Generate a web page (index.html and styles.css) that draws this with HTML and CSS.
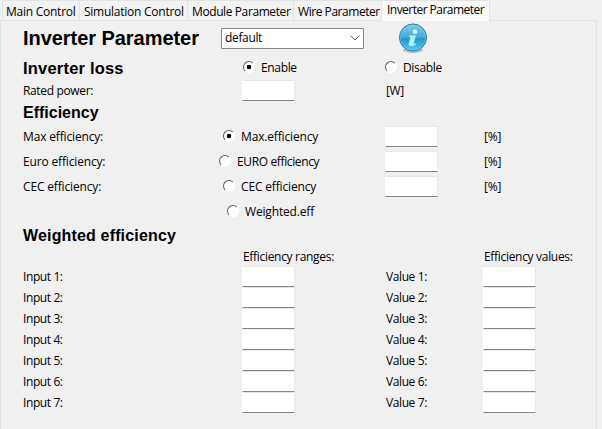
FILE: index.html
```
<!DOCTYPE html>
<html lang="en">
<head>
<meta charset="utf-8">
<title>Inverter Parameter</title>
<link rel="stylesheet" href="styles.css">
</head>
<body>
<nav class="tabs">
  <div class="tab main"><span>Main Control</span></div>
  <div class="tab sim"><span>Simulation Control</span></div>
  <div class="tab module"><span>Module Parameter</span></div>
  <div class="tab wire"><span>Wire Parameter</span></div>
  <div class="tab active"><span>Inverter Parameter</span></div>
</nav>
<main class="panel">
  <div class="row title-row">
    <h1>Inverter Parameter</h1>
    <div class="select"><span>default</span><svg width="12" height="8" viewBox="0 0 12 8"><path d="M1.500 1.500 6 6l4.500-4.500" fill="none" stroke="#555" stroke-width="1"/></svg></div>
    <svg class="info" width="30" height="31" viewBox="0 0 30 31">
      <defs>
        <linearGradient id="g" x1="0" y1="0" x2="0" y2="1"><stop offset="0" stop-color="#83c9e4"/><stop offset=".48" stop-color="#4aaed8"/><stop offset=".55" stop-color="#2795cf"/><stop offset="1" stop-color="#4fcdf0"/></linearGradient>
      </defs>
      <ellipse cx="15" cy="27" rx="10" ry="3" fill="#b3bcc0"/>
      <circle cx="15" cy="14.500" r="13.500" fill="url(#g)" stroke="#197a9f"/>
      <circle cx="15" cy="14.500" r="12.500" fill="none" stroke="#8ad9ee" stroke-opacity=".6" stroke-width=".8"/>
      <circle cx="17" cy="8.700" r="2.300" fill="#c8fbfa"/>
      <path d="M11.500 12.500h6.500l-2.200 7.500c-.2.900.6.800 1.700.2l.8.500c-1.800 2-3.400 2.500-5 2.500-2.200 0-3-1-2.500-2.700l1.600-5.500c.2-.8-.2-.9-1.300-.8z" fill="#a5f5f7"/>
    </svg>
  </div>
  <div class="row loss-row">
    <h2 class="loss-title">Inverter loss</h2>
    <label class="radio shift-lg"><i class="dot on"></i><span>Enable</span></label>
    <label class="radio disable"><i class="dot"></i><span>Disable</span></label>
  </div>
  <div class="row rated-row">
    <span>Rated power:</span><input class="shift-lg"><span class="unit">[W]</span>
  </div>
  <div class="row eff-row"><h2>Efficiency</h2></div>
  <div class="row choice"><span>Max efficiency:</span><label class="radio shift-sm"><i class="dot on"></i><span>Max.efficiency</span></label><input><span class="unit">[%]</span></div>
  <div class="row choice"><span>Euro efficiency:</span><label class="radio euro"><i class="dot"></i><span>EURO efficiency</span></label><input><span class="unit">[%]</span></div>
  <div class="row choice"><span>CEC efficiency:</span><label class="radio shift-sm"><i class="dot"></i><span>CEC efficiency</span></label><input><span class="unit">[%]</span></div>
  <div class="row choice"><span></span><label class="radio shift-md"><i class="dot"></i><span>Weighted.eff</span></label></div>
  <div class="row weighted-row"><h2 class="weighted-title">Weighted efficiency</h2></div>
  <div class="row head-row"><span></span><span class="range-head">Efficiency ranges:</span><span></span><span class="value-head">Efficiency values:</span></div>
  <div class="row pair"><span>Input 1:</span><input class="shift-lg"><span class="unit">Value 1:</span><input></div>
  <div class="row pair"><span>Input 2:</span><input class="shift-lg"><span class="unit">Value 2:</span><input></div>
  <div class="row pair"><span>Input 3:</span><input class="shift-lg"><span class="unit">Value 3:</span><input></div>
  <div class="row pair"><span>Input 4:</span><input class="shift-lg"><span class="unit">Value 4:</span><input></div>
  <div class="row pair"><span>Input 5:</span><input class="shift-lg"><span class="unit">Value 5:</span><input></div>
  <div class="row pair"><span>Input 6:</span><input class="shift-lg"><span class="unit">Value 6:</span><input></div>
  <div class="row pair"><span>Input 7:</span><input class="shift-lg"><span class="unit">Value 7:</span><input></div>
</main>
</body>
</html>
```
FILE: styles.css
```
* { box-sizing: border-box; }
body {
  margin: 0;
  height: 429px;
  overflow: hidden;
  background: #f0f0f0;
  color: #000;
  font: 12px/16px "Open Sans", "Noto Sans", sans-serif;
  letter-spacing: -0.35px;
  white-space: nowrap;
}
.tabs { display: flex; align-items: flex-end; height: 20px; padding-left: 2px; }
.tab {
  height: 20px;
  padding: 3px 0 0 4px;
  border: solid #e3e3e3;
  border-width: 1px 1px 0 0;
  background: #f2f2f2;
}
.main { width: 78px; border-left-width: 1px; padding-left: 3px; letter-spacing: -0.25px; }
.sim { width: 108px; letter-spacing: -0.25px; }
.module { width: 106px; letter-spacing: -0.4px; }
.wire { width: 88px; letter-spacing: -0.45px; }
.tab.active { width: 108px; height: 21px; margin-bottom: -1px; padding-top: 1px; padding-left: 5px; background: #f9f9f9; z-index: 1; letter-spacing: -0.53px; }
.panel {
  width: 597px;
  height: 409px;
  padding-left: 22px;
  border: solid #e3e3e3;
  border-width: 1px 1px 0 1px;
}
.row {
  display: grid;
  grid-template-columns: 197px 165px 98px 100px;
  align-items: center;
}
.title-row { height: 34px; }
.loss-row { height: 25px; }
.rated-row { height: 22px; }
.rated-row input { align-self: start; }
.eff-row { height: 22px; }
.choice { height: 25px; letter-spacing: -0.16px; }
.weighted-row { height: 23px; }
.head-row { height: 19px; letter-spacing: -0.31px; }
.pair { height: 21px; letter-spacing: -0.4px; }
h1, h2 { margin: 0; font-family: "Liberation Sans", Arial, sans-serif; font-weight: bold; letter-spacing: 0; }
h1 { font-size: 20px; line-height: 22px; letter-spacing: -0.05px; }
h2 { font-size: 16px; line-height: 18px; }
.loss-title { font-size: 16.500px; letter-spacing: 0.2px; }
.weighted-title { letter-spacing: 0.16px; }
.select {
  display: flex;
  align-items: center;
  justify-content: space-between;
  width: 143px;
  height: 21px;
  margin-left: 1px;
  padding: 0 2px 0 3px;
  border: 1px solid #858585;
  border-radius: 1px;
  background: #fff;
}
.info { margin-left: 13px; }
input {
  display: block;
  width: 53px;
  height: 21px;
  margin: 0;
  padding: 0;
  border: 1px solid #e8e8e8;
  border-left-color: #fff;
  border-bottom-color: #858585;
  border-radius: 0;
  background: #fff;
}
.shift-lg { margin-left: 22px; }
.shift-sm { margin-left: 2px; }
.shift-md { margin-left: 6px; }
.unit { padding-left: 1px; }
.radio { display: flex; align-items: center; }
.dot {
  flex: none;
  width: 12px;
  height: 12px;
  margin: -2px 6px 0 1px;
  border: 1.500px solid;
  border-color: #606060 #fff #fff #606060;
  border-radius: 50%;
  background: #fff;
}
.dot.on { background: radial-gradient(circle at center, #000 0 2px, #fff 2.600px); }
.disable { margin-left: -1px; }
.euro { letter-spacing: -0.37px; }
.euro .dot { margin-left: -1px; margin-right: 6px; }
.range-head { padding-left: 23px; }
.value-head { padding-left: 1px; }
```
